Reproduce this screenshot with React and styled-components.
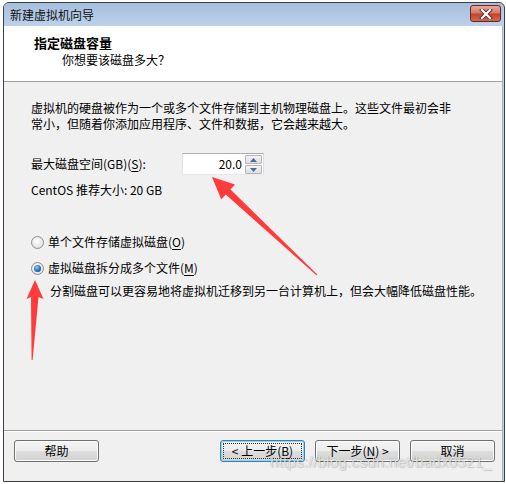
import React from "react";
import styled, { createGlobalStyle } from "styled-components";

const GlobalStyle = createGlobalStyle`
  body {
    margin: 0;
    background: #ffffff;
    font-family: "Noto Sans CJK SC", "Noto Sans", sans-serif;
    font-size: 12px;
    color: #000;
  }
`;

// --- 外框 ---
const Page = styled.div`
  position: relative;
  width: 506px;
  height: 484px;
  padding: 2px 0 0 3px;
  box-sizing: border-box;
  overflow: hidden;
`;

const Window = styled.div`
  width: 502px;
  height: 480px;
  box-sizing: border-box;
  border: 1px solid #3a3f47;
  border-radius: 6px 6px 0 0;
  background: #bcd2ea;
  padding-right: 1px;
  display: flex;
  flex-direction: column;
`;

const TitleBar = styled.div`
  height: 23px;
  flex-shrink: 0;
  display: flex;
  align-items: flex-start;
  justify-content: space-between;
  background: linear-gradient(#a6bfdd, #bcd1ea);
  border-radius: 5px 5px 0 0;
`;

const TitleText = styled.span`
  padding: 3px 0 0 6px;
  line-height: 17px;
  font-size: 12px;
  color: #111;
`;

const CloseButton = styled.div`
  margin: 2px 2px 0 0;
  width: 31px;
  height: 17px;
  box-sizing: border-box;
  border: 1px solid #6e2424;
  border-radius: 3px;
  background: linear-gradient(#e9a998 0%, #d57a66 45%, #c2452e 55%, #d06a4f 100%);
  display: flex;
  align-items: center;
  justify-content: center;
`;

const Content = styled.div`
  flex: 1;
  display: flex;
  flex-direction: column;
  border-right: 1px solid #a7b6c7;
  background: #f0f0f0;
`;

// --- 顶部说明 ---
const Header = styled.div`
  height: 55px;
  flex-shrink: 0;
  box-sizing: border-box;
  background: #ffffff;
  padding: 8px 0 0 30px;
`;

const HeaderLine = styled.div`
  height: 1px;
  flex-shrink: 0;
  background: #a0a0a0;
`;

const HeaderTitle = styled.div`
  font-weight: bold;
  font-size: 13px;
  line-height: 17px;
`;

const HeaderSub = styled.div`
  margin-left: 28px;
  line-height: 17px;
  font-size: 12px;
`;

// --- 主体 ---
const Body = styled.div`
  flex: 1;
  padding: 18px 0 0 27px;
`;

const Paragraph = styled.div`
  width: 424px;
  line-height: 16px;
`;

const FieldRow = styled.div`
  display: flex;
  align-items: center;
  margin-top: 21px;
`;

const FieldLabel = styled.div`
  width: 151px;
  line-height: 16px;
`;

const Spin = styled.div`
  display: flex;
  height: 22px;
  box-sizing: border-box;
  border: 1px solid #abadb3;
  border-color: #abadb3 #dbdfe6 #e3e9ef #e2e3ea;
  background: #fff;
`;

const SpinInput = styled.div`
  width: 59px;
  text-align: right;
  padding-right: 3px;
  line-height: 20px;
  font-size: 12px;
`;

const SpinButtons = styled.div`
  display: flex;
  flex-direction: column;
  gap: 1px;
  padding: 1px 1px 0 0;
`;

const SpinButton = styled.div`
  width: 15px;
  height: 8px;
  border: 1px solid #b6b6b6;
  border-radius: 1px;
  background: linear-gradient(#f4f4f4, #dedede);
  display: flex;
  align-items: center;
  justify-content: center;
`;

const Note = styled.div`
  margin-top: ${(p) => p.$top || 0}px;
  margin-left: ${(p) => p.$indent || 0}px;
  line-height: 16px;
`;

const RadioRow = styled.label`
  display: flex;
  align-items: center;
  gap: 4px;
  margin-top: ${(p) => p.$top}px;
  line-height: 16px;
`;

const RadioDot = styled.span`
  width: 13px;
  height: 13px;
  box-sizing: border-box;
  border-radius: 50%;
  border: 1px solid #8e8f8f;
  background: radial-gradient(circle at 45% 40%, #ffffff 0%, #e6e6e6 60%, #cfcfcf 100%);
  display: flex;
  align-items: center;
  justify-content: center;

  &::after {
    content: "";
    display: ${(p) => (p.$checked ? "block" : "none")};
    width: 7px;
    height: 7px;
    border-radius: 50%;
    background: radial-gradient(circle at 40% 35%, #8fd0ff 0%, #2a76c6 50%, #0b3c7c 100%);
  }
`;

const Key = styled.span`
  text-decoration: underline;
  text-underline-offset: 2px;
`;

// --- 底部按钮 ---
const Footer = styled.div`
  height: 41px;
  flex-shrink: 0;
  border-top: 1px solid #a0a0a0;
  box-shadow: inset 0 1px 0 #ffffff;
  padding: 9px 7px 0 10px;
  display: flex;
  gap: 10px;
`;

const Spacer = styled.div`
  flex: 1;
`;

const Button = styled.div`
  position: relative;
  width: 85px;
  height: 22px;
  box-sizing: border-box;
  border: 1px solid ${(p) => (p.$focused ? "#3c7fb1" : "#707070")};
  border-radius: 3px;
  background: linear-gradient(#f4f4f4 0%, #ececec 50%, #dedede 50%, #d2d2d2 100%);
  box-shadow: inset 0 0 0 1px ${(p) => (p.$focused ? "#8fd6f5" : "#fcfcfc")};
  display: flex;
  align-items: center;
  justify-content: center;
  line-height: 16px;
  font-size: 12px;

  &::after {
    content: "";
    display: ${(p) => (p.$focused ? "block" : "none")};
    position: absolute;
    inset: 2px;
    border: 1px dotted #333;
  }
`;

// --- 覆盖层 ---
const Watermark = styled.div`
  position: absolute;
  left: 270px;
  top: 453px;
  font-family: "Liberation Sans", Arial, sans-serif;
  font-size: 15px;
  line-height: 18px;
  letter-spacing: 0.3px;
  color: rgba(255, 255, 255, 0.75);
  text-shadow: 0 0 1px rgba(0, 0, 0, 0.35), 1px 1px 1px rgba(0, 0, 0, 0.15);
  pointer-events: none;
`;

const Overlay = styled.svg`
  position: absolute;
  left: 0;
  top: 0;
  pointer-events: none;
`;

function CloseGlyph() {
  return (
    <svg width="14" height="10" viewBox="0 0 14 10">
      <path d="M3 1 L11 9 M11 1 L3 9" stroke="#5a2a2a" strokeWidth="4" strokeLinecap="square" />
      <path d="M3 1 L11 9 M11 1 L3 9" stroke="#ffffff" strokeWidth="2.2" strokeLinecap="square" />
    </svg>
  );
}

function Triangle({ up }) {
  return (
    <svg width="7" height="4" viewBox="0 0 7 4">
      <path d={up ? "M0 4 L3.5 0 L7 4 Z" : "M0 0 L3.5 4 L7 0 Z"} fill="#4f6a9a" />
    </svg>
  );
}

function Arrows() {
  return (
    <Overlay width="506" height="484" viewBox="0 0 506 484">
      <polygon
        points="212,177 235,184.5 230.5,189.4 317.3,274.6 316.7,275.4 225.7,194.6 221.3,199.5"
        fill="#ff3b3b"
      />
      <polygon
        points="35,280 43.5,299 38.5,297 32.6,360 31.6,360 31,297 26.5,299"
        fill="#ff3b3b"
      />
    </Overlay>
  );
}

export default function App() {
  return (
    <>
      <GlobalStyle />
      <Page>
        <Window>
          <TitleBar>
            <TitleText>新建虚拟机向导</TitleText>
            <CloseButton>
              <CloseGlyph />
            </CloseButton>
          </TitleBar>
          <Content>
            <Header>
              <HeaderTitle>指定磁盘容量</HeaderTitle>
              <HeaderSub>你想要该磁盘多大？</HeaderSub>
            </Header>
            <HeaderLine />
            <Body>
              <Paragraph>
                虚拟机的硬盘被作为一个或多个文件存储到主机物理磁盘上。这些文件最初会非常小，但随着你添加应用程序、文件和数据，它会越来越大。
              </Paragraph>
              <FieldRow>
                <FieldLabel>
                  最大磁盘空间(GB)(<Key>S</Key>):
                </FieldLabel>
                <Spin>
                  <SpinInput>20.0</SpinInput>
                  <SpinButtons>
                    <SpinButton>
                      <Triangle up />
                    </SpinButton>
                    <SpinButton>
                      <Triangle />
                    </SpinButton>
                  </SpinButtons>
                </Spin>
              </FieldRow>
              <Note $top={7}>CentOS 推荐大小: 20 GB</Note>
              <RadioRow $top={36}>
                <RadioDot />
                <span>
                  单个文件存储虚拟磁盘(<Key>O</Key>)
                </span>
              </RadioRow>
              <RadioRow $top={10}>
                <RadioDot $checked />
                <span>
                  虚拟磁盘拆分成多个文件(<Key>M</Key>)
                </span>
              </RadioRow>
              <Note $top={7} $indent={19}>
                分割磁盘可以更容易地将虚拟机迁移到另一台计算机上，但会大幅降低磁盘性能。
              </Note>
            </Body>
            <Footer>
              <Button>帮助</Button>
              <Spacer />
              <Button $focused>
                &lt; 上一步(<Key>B</Key>)
              </Button>
              <Button>
                下一步(<Key>N</Key>) &gt;
              </Button>
              <Button>取消</Button>
            </Footer>
          </Content>
        </Window>
        <Watermark>https://blog.csdn.net/badx0521_</Watermark>
        <Arrows />
      </Page>
    </>
  );
}
